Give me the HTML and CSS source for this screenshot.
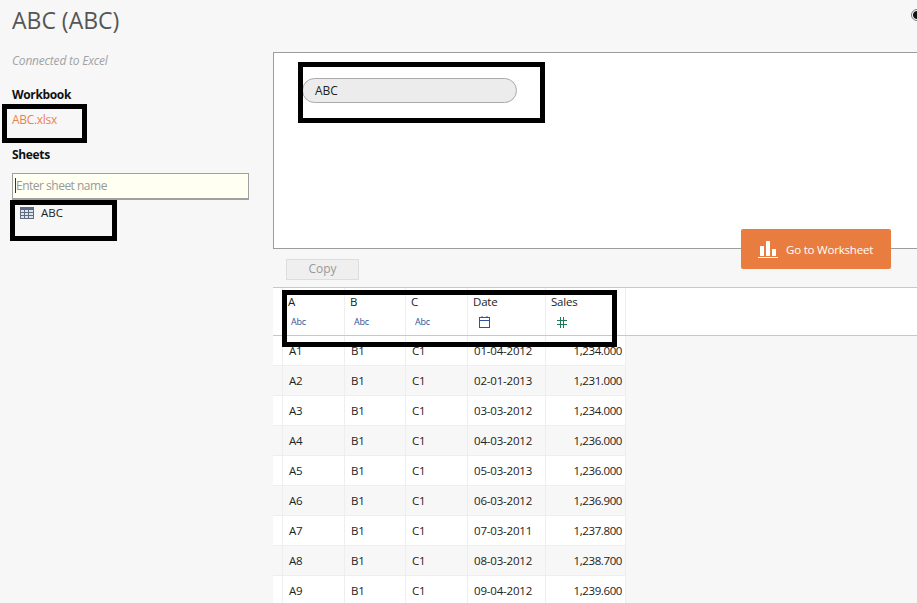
FILE: index.html
```html
<!DOCTYPE html>
<html lang="en">
<head>
<meta charset="utf-8">
<title>ABC (ABC)</title>
<link rel="stylesheet" href="styles.css">
</head>
<body>
<div class="app">
  <aside class="side">
    <h1 class="title">ABC (ABC)</h1>
    <p class="conn">Connected to Excel</p>
    <h2 class="label">Workbook</h2>
    <a class="file">ABC.xlsx</a>
    <h2 class="label sheets">Sheets</h2>
    <div class="search"><span class="caret"></span><span>Enter sheet name</span></div>
    <div class="sheet">
      <svg class="sheet-ico" width="14" height="12" viewBox="0 0 14 12"><rect width="14" height="12" fill="#5f6b80"/><g fill="#dfe3ea"><rect x="1" y="3" width="3" height="2"/><rect x="5" y="3" width="3" height="2"/><rect x="9" y="3" width="4" height="2"/><rect x="1" y="6" width="3" height="2"/><rect x="5" y="6" width="3" height="2"/><rect x="9" y="6" width="4" height="2"/><rect x="1" y="9" width="3" height="2"/><rect x="5" y="9" width="3" height="2"/><rect x="9" y="9" width="4" height="2"/></g></svg>
      <span>ABC</span>
    </div>
  </aside>
  <main class="main">
    <section class="canvas"><div class="pill">ABC</div></section>
    <div class="tools"><button class="copy">Copy</button></div>
    <section class="grid">
      <div class="row head">
        <div class="cell"><span>A</span><span class="type">Abc</span></div>
        <div class="cell"><span>B</span><span class="type">Abc</span></div>
        <div class="cell"><span>C</span><span class="type">Abc</span></div>
        <div class="cell"><span>Date</span>
          <svg class="tico" width="11" height="12" viewBox="0 0 11 12" fill="none" stroke="#2f5597"><rect x=".5" y="1.5" width="10" height="10"/><path d="M0 4.500h11M3 0v2M8 0v2"/></svg>
        </div>
        <div class="cell"><span>Sales</span>
          <svg class="tico hash" width="10" height="11" viewBox="0 0 10 11" fill="none" stroke="#1f7a55"><path d="M3.500 0v11M6.500 0v11M0 3.500h10M0 7.500h10"/></svg>
        </div>
      </div>
      <div class="row"><div class="cell">A1</div><div class="cell">B1</div><div class="cell">C1</div><div class="cell">01-04-2012</div><div class="cell num">1,234.000</div></div>
      <div class="row"><div class="cell">A2</div><div class="cell">B1</div><div class="cell">C1</div><div class="cell">02-01-2013</div><div class="cell num">1,231.000</div></div>
      <div class="row"><div class="cell">A3</div><div class="cell">B1</div><div class="cell">C1</div><div class="cell">03-03-2012</div><div class="cell num">1,234.000</div></div>
      <div class="row"><div class="cell">A4</div><div class="cell">B1</div><div class="cell">C1</div><div class="cell">04-03-2012</div><div class="cell num">1,236.000</div></div>
      <div class="row"><div class="cell">A5</div><div class="cell">B1</div><div class="cell">C1</div><div class="cell">05-03-2013</div><div class="cell num">1,236.000</div></div>
      <div class="row"><div class="cell">A6</div><div class="cell">B1</div><div class="cell">C1</div><div class="cell">06-03-2012</div><div class="cell num">1,236.900</div></div>
      <div class="row"><div class="cell">A7</div><div class="cell">B1</div><div class="cell">C1</div><div class="cell">07-03-2011</div><div class="cell num">1,237.800</div></div>
      <div class="row"><div class="cell">A8</div><div class="cell">B1</div><div class="cell">C1</div><div class="cell">08-03-2012</div><div class="cell num">1,238.700</div></div>
      <div class="row"><div class="cell">A9</div><div class="cell">B1</div><div class="cell">C1</div><div class="cell">09-04-2012</div><div class="cell num">1,239.600</div></div>
    </section>
  </main>
</div>
<button class="goto">
  <svg width="20" height="18" viewBox="0 0 20 18" fill="#fff"><rect x="2" y="6" width="4" height="10"/><rect x="8" y="1" width="4" height="15"/><rect x="14" y="9" width="4" height="7"/><rect y="17" width="20" height="1"/></svg>
  <span>Go to Worksheet</span>
</button>
<span class="radio"></span>
<div class="mark mark-file"></div>
<div class="mark mark-sheet"></div>
<div class="mark mark-pill"></div>
<div class="mark mark-head"></div>
</body>
</html>
```
FILE: styles.css
```css
html, body { margin: 0; height: 603px; overflow: hidden; }
body { background: #f7f7f7; font-family: "Open Sans", "Noto Sans", sans-serif; font-size: 11.500px; color: #222; position: relative; }
.app { display: grid; grid-template-columns: 273px 1fr; height: 603px; }
.side { padding: 0 24px 0 12px; }
.title { margin: 5px 0 0; font-size: 23px; line-height: 30px; font-weight: 400; color: #555; }
.conn { margin: 18px 0 0; font-size: 12px; line-height: 16px; font-style: italic; color: #a2a2a2; letter-spacing: -.2px; }
.label { margin: 17px 0 0; font-size: 12px; line-height: 18px; font-weight: 700; color: #111; letter-spacing: -.35px; }
.file { display: block; margin-top: 7px; font-size: 12px; line-height: 18px; color: #ef7f4f; letter-spacing: -.3px; }
.label.sheets { margin-top: 17px; }
.search { display: flex; align-items: center; height: 27px; margin-top: 9px; padding: 0 0 1px 2px; box-sizing: border-box; border: 1px solid #a0a0a0; border-bottom-width: 2px; background: #fffff2; color: #999; font-size: 12px; letter-spacing: -.5px; }
.caret { width: 1px; height: 15px; background: #333; }
.sheet { display: flex; align-items: center; gap: 7px; padding: 4px 0 0 8px; line-height: 18px; color: #222; }
.main { display: flex; flex-direction: column; padding-top: 52px; min-width: 0; }
.canvas { height: 197px; flex: none; box-sizing: border-box; background: #fff; border: 1px solid #9c9c9c; border-right: 0; padding: 25px 0 0 28px; }
.pill { box-sizing: border-box; width: 215px; height: 25px; padding-left: 12px; line-height: 23px; background: #ececec; border: 1px solid #aaa; border-radius: 13px; color: #222; font-size: 12px; }
.tools { height: 38px; flex: none; padding: 10px 0 0 13px; box-sizing: border-box; }
.copy { display: block; width: 73px; height: 21px; padding: 0 0 2px; background: #efefef; border: 1px solid #ddd; font: 12px "Open Sans", sans-serif; color: #999; }
.grid { flex: 1; min-height: 0; border-top: 1px solid #c8c8c8; overflow: hidden; }
.row { display: grid; grid-template-columns: 63px 61px 62px 78px 80px; width: 353px; height: 30px; padding-left: 9px; box-sizing: border-box; background: #fff; border-bottom: 1px solid #eee; }
.row:nth-child(odd) { background: #f7f7f7; }
.cell { padding-left: 6px; line-height: 29px; border-right: 1px solid #eee; color: #222; letter-spacing: -.2px; }
.cell:first-child { border-left: 1px solid #eee; }
.num { padding: 0 3px 0 0; text-align: right; letter-spacing: -.4px; }
.row.head { width: auto; height: 48px; background: #fff; border-bottom: 1px solid #c8c8c8; grid-template-columns: 63px 61px 62px 78px 80px 1fr; }
.head .cell { display: flex; flex-direction: column; align-items: flex-start; padding: 5px 0 0 5px; line-height: 18px; }
.type { margin: 4px 0 0 4px; font-size: 9px; line-height: 14px; color: #2f5597; }
.head .cell:first-child .type { margin-left: 3px; }
.tico { margin: 5px 0 0 6px; }
.hash { margin: 6px 0 0 6px; }
.goto { position: absolute; left: 741px; top: 229px; display: flex; align-items: center; gap: 8px; width: 150px; height: 40px; padding: 0 0 0 17px; border: 0; border-radius: 2px; background: #e97d40; color: #fff; font: 11.500px "Open Sans", sans-serif; letter-spacing: -.2px; }
.radio { position: absolute; left: 911px; top: 9px; width: 10px; height: 10px; border: 1px solid #777; border-radius: 50%; background: radial-gradient(circle, #111 0 3.500px, #fff 4.500px); }
.mark { position: absolute; box-sizing: border-box; border: 5px solid #000; }
.mark-file { left: 2px; top: 104px; width: 85px; height: 39px; }
.mark-sheet { left: 10px; top: 200px; width: 107px; height: 41px; }
.mark-pill { left: 298px; top: 62px; width: 247px; height: 61px; }
.mark-head { left: 282px; top: 290px; width: 335px; height: 57px; }
```
